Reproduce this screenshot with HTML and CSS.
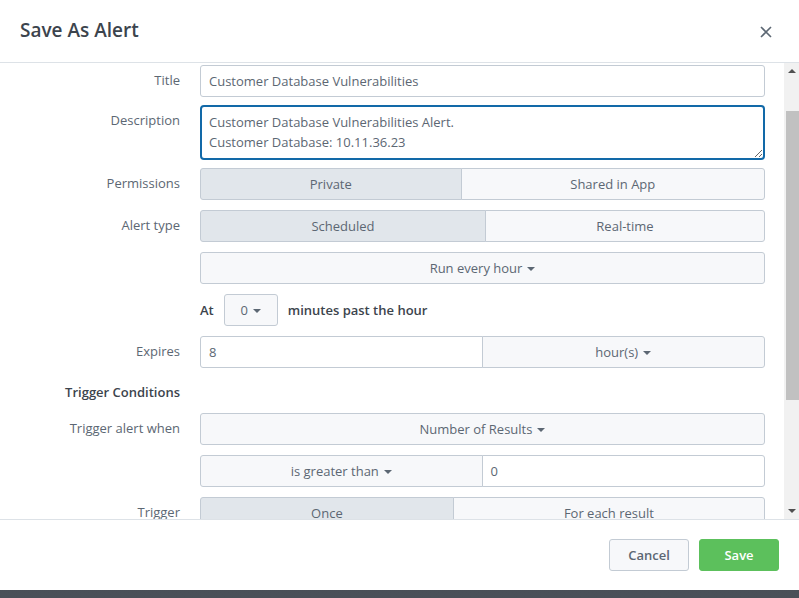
FILE: index.html
```html
<!DOCTYPE html>
<html lang="en">
<head>
<meta charset="utf-8">
<title>Save As Alert</title>
<link rel="stylesheet" href="styles.css">
</head>
<body>
<div class="modal">
  <header class="modal-header">
    <h2 class="modal-title">Save As Alert</h2>
    <button class="close" aria-label="Close">
      <svg width="12" height="12" viewBox="0 0 12 12"><path d="M1 1 L11 11 M11 1 L1 11" stroke="#5c6773" stroke-width="1.6" fill="none"/></svg>
    </button>
  </header>
  <div class="modal-main">
    <div class="modal-body" id="modal-body">
      <div class="form">
        <div class="row heading-row"><div class="label heading">Settings</div></div>

        <div class="row row-title" id="row-title"><div class="label">Title</div>
          <div class="control"><div class="text-input">Customer Database Vulnerabilities</div></div></div>

        <div class="row row-desc"><div class="label">Description</div>
          <div class="control"><textarea class="textarea" spellcheck="false">Customer Database Vulnerabilities Alert.
Customer Database: 10.11.36.23</textarea></div></div>

        <div class="row"><div class="label">Permissions</div>
          <div class="control btn-group">
            <div class="seg active">Private</div><div class="seg">Shared in App</div>
          </div></div>

        <div class="row"><div class="label">Alert type</div>
          <div class="control btn-group">
            <div class="seg active">Scheduled</div><div class="seg">Real-time</div>
          </div></div>

        <div class="row"><div class="label"></div>
          <div class="control"><div class="dropdown full">Run every hour<span class="caret"></span></div></div></div>

        <div class="row"><div class="label"></div>
          <div class="control inline">
            <span class="strong">At</span>
            <div class="dropdown small">0<span class="caret"></span></div>
            <span class="strong">minutes past the hour</span>
          </div></div>

        <div class="row"><div class="label">Expires</div>
          <div class="control combo">
            <div class="text-input first">8</div><div class="dropdown second">hour(s)<span class="caret"></span></div>
          </div></div>

        <div class="row heading-row"><div class="label heading">Trigger Conditions</div></div>

        <div class="row"><div class="label">Trigger alert when</div>
          <div class="control"><div class="dropdown full">Number of Results<span class="caret"></span></div></div></div>

        <div class="row"><div class="label"></div>
          <div class="control combo">
            <div class="dropdown first">is greater than<span class="caret"></span></div><div class="text-input second">0</div>
          </div></div>

        <div class="row"><div class="label">Trigger</div>
          <div class="control btn-group">
            <div class="seg active">Once</div><div class="seg">For each result</div>
          </div></div>

        <div class="row"><div class="label">Throttle</div>
          <div class="control inline"><span class="checkbox"></span></div></div>

        <div class="row heading-row"><div class="label heading">Trigger Actions</div></div>

        <div class="row"><div class="label"></div>
          <div class="control inline"><div class="dropdown add">+ Add Actions<span class="caret"></span></div></div></div>
      </div>
    </div>
    <div class="scrollbar" aria-hidden="true">
      <div class="sb-btn"><span class="sb-up"></span></div>
      <div class="sb-track"><div class="sb-thumb"></div></div>
      <div class="sb-btn"><span class="sb-down"></span></div>
    </div>
  </div>
  <footer class="modal-footer">
    <button class="btn cancel">Cancel</button>
    <button class="btn save">Save</button>
  </footer>
</div>
<script src="script.js"></script>
</body>
</html>
```

FILE: styles.css
```css
* { box-sizing: border-box; }
html, body { margin: 0; padding: 0; }
body {
  width: 799px;
  height: 598px;
  overflow: hidden;
  background: linear-gradient(#3b4148, #4a5058);
  font-family: "Open Sans", "Liberation Sans", sans-serif;
  font-size: 13px;
  color: #5c6773;
}
.modal {
  width: 799px;
  height: 590px;
  background: #fff;
  display: flex;
  flex-direction: column;
}
.modal-header {
  height: 63px;
  flex: none;
  border-bottom: 1px solid #dde2e7;
  display: flex;
  align-items: center;
  justify-content: space-between;
  padding: 0 27px 0 20px;
}
.modal-title {
  margin: 0;
  font-size: 19px;
  font-weight: 600;
  color: #3c444d;
  line-height: 24px;
  padding-bottom: 2px;
}
.close {
  border: 0;
  background: none;
  padding: 0;
  width: 12px;
  height: 12px;
  display: flex;
  align-items: center;
  justify-content: center;
  margin-top: 2px;
}
.modal-main {
  flex: 1;
  min-height: 0;
  display: flex;
}
.modal-body {
  flex: 1;
  min-width: 0;
  overflow: hidden;
}
.scrollbar {
  width: 15px;
  flex: none;
  background: #f1f1f1;
  display: flex;
  flex-direction: column;
}
.sb-btn {
  height: 15px;
  flex: none;
  display: flex;
  align-items: center;
  justify-content: center;
}
.sb-up, .sb-down {
  width: 0; height: 0;
  border-left: 4px solid transparent;
  border-right: 4px solid transparent;
}
.sb-up { border-bottom: 4px solid #505050; margin-top: 1px; }
.sb-down { border-top: 4px solid #505050; margin-bottom: 1px; }
.sb-track {
  flex: 1;
  padding: 33px 0 0 2px;
}
.sb-thumb {
  height: 289px;
  background: #c1c1c1;
}
.form {
  padding: 14px 19px 33px 0;
  display: flex;
  flex-direction: column;
  gap: 10px;
}
.row {
  display: flex;
  align-items: flex-start;
  gap: 20px;
}
.row-title { margin-bottom: -2px; }
.row-desc { margin-bottom: -2px; }
.heading-row { margin-bottom: -1px; }
.label {
  width: 180px;
  flex: none;
  text-align: right;
  line-height: 31px;
  color: #5c6773;
  white-space: nowrap;
}
.heading-row .label { line-height: 24px; padding-top: 2px; }
.heading { font-weight: 600; color: #3c444d; }
.control {
  flex: 1;
  min-width: 0;
}
.text-input {
  height: 32px;
  border: 1px solid #c3cbd4;
  border-radius: 3px;
  background: #fff;
  padding: 0 8px;
  line-height: 30px;
  color: #5c6773;
  white-space: nowrap;
  overflow: hidden;
}
.textarea {
  display: block;
  width: 100%;
  height: 55px;
  border: 2px solid #1269a8;
  border-radius: 4px;
  padding: 5px 7px;
  font-family: inherit;
  font-size: 13px;
  line-height: 20px;
  color: #5c6773;
  resize: vertical;
  outline: none;
  overflow: hidden;
}
.btn-group { display: flex; }
.seg {
  flex: 1 1 auto;
  height: 32px;
  line-height: 30px;
  text-align: center;
  border: 1px solid #c3cbd4;
  background: #f7f8fa;
  color: #5c6773;
  padding: 0 12px;
  white-space: nowrap;
}
.seg + .seg { margin-left: -1px; }
.seg:first-child { border-radius: 3px 0 0 3px; }
.seg:last-child { border-radius: 0 3px 3px 0; }
.seg.active { background: #e1e6eb; }
.dropdown {
  height: 32px;
  line-height: 30px;
  border: 1px solid #c3cbd4;
  border-radius: 3px;
  background: #f7f8fa;
  color: #5c6773;
  text-align: center;
  white-space: nowrap;
}
.caret {
  display: inline-block;
  width: 0;
  height: 0;
  border-left: 4px solid transparent;
  border-right: 4px solid transparent;
  border-top: 4px solid #5c6773;
  margin-left: 5px;
  vertical-align: 2px;
}
.inline {
  display: flex;
  align-items: center;
  gap: 10px;
  height: 32px;
}
.strong { font-weight: 600; color: #3c444d; }
.dropdown.small { width: 54px; }
.dropdown.add { padding: 0 12px; }
.combo {
  display: grid;
  grid-template-columns: 1fr 1fr;
}
.combo .first { border-radius: 3px 0 0 3px; }
.combo .second { margin-left: -1px; border-radius: 0 3px 3px 0; }
.checkbox {
  width: 14px; height: 14px;
  border: 1px solid #c3cbd4;
  border-radius: 2px;
  background: #fff;
}
.modal-footer {
  height: 71px;
  flex: none;
  border-top: 1px solid #dde2e7;
  display: flex;
  align-items: center;
  justify-content: flex-end;
  gap: 10px;
  padding: 0 20px 0 0;
}
.btn {
  width: 80px;
  height: 32px;
  border-radius: 3px;
  font-family: inherit;
  font-size: 13px;
  font-weight: 600;
  padding: 0;
  cursor: pointer;
}
.cancel {
  background: #f7f8fa;
  border: 1px solid #c3cbd4;
  color: #5c6773;
}
.save {
  background: #5cc05c;
  border: 1px solid #5cc05c;
  color: #fff;
}
```

FILE: script.js
```js
(function () {
  var body = document.getElementById('modal-body');
  var title = document.getElementById('row-title');
  var offset = title.getBoundingClientRect().top - body.getBoundingClientRect().top;
  body.scrollTop = Math.round(offset - 2);
})();
```
